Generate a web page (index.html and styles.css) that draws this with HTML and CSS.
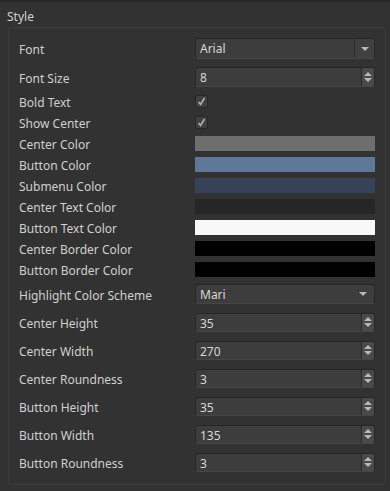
FILE: index.html
```html
<!DOCTYPE html>
<html lang="en">
<head>
    <meta charset="UTF-8">
    <meta name="viewport" content="width=device-width, initial-scale=1.0">
    <title>Style Settings</title>
    <link rel="stylesheet" href="styles.css">
</head>
<body>

<div class="panel">
    <div class="group-title">Style</div>
    <div class="group">

        <div class="row row-first">
            <span class="label">Font</span>
            <div class="combo">
                <span class="value">Arial</span>
                <span class="combo-btn"><span class="arrow-down"></span></span>
            </div>
        </div>

        <div class="row row-spin">
            <span class="label">Font Size</span>
            <div class="spin spin-tall">
                <span class="value">8</span>
                <span class="spin-btns"><span class="arrow-up"></span><span class="arrow-down"></span></span>
            </div>
        </div>

        <div class="row row-small">
            <span class="label">Bold Text</span>
            <span class="check">
                <svg width="9" height="9" viewBox="0 0 9 9"><path d="M1.5 5 L3.5 7.5 L7.5 1" fill="none" stroke="#b4b4b4" stroke-width="1.5"/></svg>
            </span>
        </div>

        <div class="row row-small">
            <span class="label">Show Center</span>
            <span class="check">
                <svg width="9" height="9" viewBox="0 0 9 9"><path d="M1.5 5 L3.5 7.5 L7.5 1" fill="none" stroke="#b4b4b4" stroke-width="1.5"/></svg>
            </span>
        </div>

        <div class="row row-small">
            <span class="label">Center Color</span>
            <span class="swatch" style="background-color: #6e6e6e;"></span>
        </div>
        <div class="row row-small">
            <span class="label">Button Color</span>
            <span class="swatch" style="background-color: #5f7898;"></span>
        </div>
        <div class="row row-small">
            <span class="label">Submenu Color</span>
            <span class="swatch" style="background-color: #354257;"></span>
        </div>
        <div class="row row-small">
            <span class="label">Center Text Color</span>
            <span class="swatch" style="background-color: #262626;"></span>
        </div>
        <div class="row row-small">
            <span class="label">Button Text Color</span>
            <span class="swatch" style="background-color: #f8f8f8;"></span>
        </div>
        <div class="row row-small">
            <span class="label">Center Border Color</span>
            <span class="swatch" style="background-color: #000000;"></span>
        </div>
        <div class="row row-small">
            <span class="label">Button Border Color</span>
            <span class="swatch" style="background-color: #000000;"></span>
        </div>

        <div class="row row-spin">
            <span class="label">Highlight Color Scheme</span>
            <div class="combo combo-plain">
                <span class="value">Mari</span>
                <span class="combo-btn"><span class="arrow-down"></span></span>
            </div>
        </div>

        <div class="row row-spin">
            <span class="label">Center Height</span>
            <div class="spin">
                <span class="value">35</span>
                <span class="spin-btns"><span class="arrow-up"></span><span class="arrow-down"></span></span>
            </div>
        </div>
        <div class="row row-spin">
            <span class="label">Center Width</span>
            <div class="spin">
                <span class="value">270</span>
                <span class="spin-btns"><span class="arrow-up"></span><span class="arrow-down"></span></span>
            </div>
        </div>
        <div class="row row-spin">
            <span class="label">Center Roundness</span>
            <div class="spin">
                <span class="value">3</span>
                <span class="spin-btns"><span class="arrow-up"></span><span class="arrow-down"></span></span>
            </div>
        </div>
        <div class="row row-spin">
            <span class="label">Button Height</span>
            <div class="spin">
                <span class="value">35</span>
                <span class="spin-btns"><span class="arrow-up"></span><span class="arrow-down"></span></span>
            </div>
        </div>
        <div class="row row-spin">
            <span class="label">Button Width</span>
            <div class="spin">
                <span class="value">135</span>
                <span class="spin-btns"><span class="arrow-up"></span><span class="arrow-down"></span></span>
            </div>
        </div>
        <div class="row row-spin">
            <span class="label">Button Roundness</span>
            <div class="spin">
                <span class="value">3</span>
                <span class="spin-btns"><span class="arrow-up"></span><span class="arrow-down"></span></span>
            </div>
        </div>

    </div>
</div>

</body>
</html>
```

FILE: styles.css
```css
body {
    margin: 0;
    padding: 0;
    background-color: #323232;
    font-family: "Noto Sans", "DejaVu Sans", sans-serif;
    font-size: 12px;
    color: #d0d0d0;
}

.panel {
    border-top: 2px solid #282828;
    padding: 0 4px 0 8px;
    height: 489px;
    box-sizing: border-box;
}

.group-title {
    height: 25px;
    line-height: 29px;
    margin-left: -1px;
}

.group {
    border: 1px solid #3c3c3c;
    border-radius: 2px;
    padding: 6px 10px 8px 10px;
    width: 356px;
}

.row {
    display: flex;
    align-items: center;
}

.row-first {
    height: 29px;
}

.row-spin {
    height: 28px;
}

.row-small {
    height: 21px;
}

.label {
    width: 176px;
    flex-shrink: 0;
    padding-top: 2px;
}

.combo,
.spin {
    display: flex;
    align-items: stretch;
    width: 180px;
    height: 19px;
    box-sizing: border-box;
    background-color: #3d3d3d;
    border: 1px solid #282828;
    border-top-color: #252525;
    border-bottom-color: #474747;
    border-radius: 3px;
    color: #d8d8d8;
}

.combo {
    height: 21px;
}

.combo-plain {
    height: 20px;
}

.spin-tall {
    height: 20px;
}

.value {
    flex: 1;
    padding-left: 4px;
    line-height: 19px;
}

.combo-btn {
    width: 19px;
    border-left: 1px solid #2a2a2a;
    display: flex;
    align-items: center;
    justify-content: center;
    background-color: #404040;
    border-radius: 0 2px 2px 0;
}

.combo-plain .combo-btn {
    border-left: none;
    background-color: transparent;
    width: 22px;
}

.spin-btns {
    width: 12px;
    border-left: 1px solid #2a2a2a;
    background-color: #4a4a4a;
    border-radius: 0 2px 2px 0;
    display: flex;
    flex-direction: column;
    align-items: center;
    justify-content: center;
    gap: 2px;
}

.arrow-down,
.arrow-up {
    width: 0;
    height: 0;
    border-left: 4px solid transparent;
    border-right: 4px solid transparent;
}

.arrow-down {
    border-top: 4px solid #b8b8b8;
}

.arrow-up {
    border-bottom: 4px solid #b8b8b8;
}

.check {
    width: 13px;
    height: 13px;
    box-sizing: border-box;
    background-color: #404040;
    border: 1px solid #262626;
    border-radius: 2px;
    display: flex;
    align-items: center;
    justify-content: center;
}

.swatch {
    width: 180px;
    height: 15px;
}
```
